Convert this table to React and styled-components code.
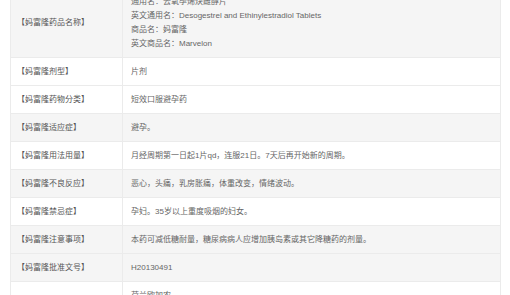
import React from 'react'
import styled, { createGlobalStyle } from 'styled-components'

const GlobalStyle = createGlobalStyle`
    body {
        margin: 0;
        background: #fff;
        font-family: "Liberation Sans", "Noto Sans CJK SC", sans-serif;
    }
`;

const rows = [
    {
        label: '【妈富隆药品名称】',
        lines: [
            '通用名：去氧孕烯炔雌醇片',
            '英文通用名：Desogestrel and Ethinylestradiol Tablets',
            '商品名：妈富隆',
            '英文商品名：Marvelon',
        ],
        shade: true,
    },
    { label: '【妈富隆剂型】', lines: ['片剂'] },
    { label: '【妈富隆药物分类】', lines: ['短效口服避孕药'] },
    { label: '【妈富隆适应症】', lines: ['避孕。'], shade: true },
    { label: '【妈富隆用法用量】', lines: ['月经周期第一日起1片qd，连服21日。7天后再开始新的周期。'] },
    { label: '【妈富隆不良反应】', lines: ['恶心，头痛，乳房胀痛，体重改变，情绪波动。'], shade: true },
    { label: '【妈富隆禁忌症】', lines: ['孕妇。35岁以上重度吸烟的妇女。'] },
    { label: '【妈富隆注意事项】', lines: ['本药可减低糖耐量，糖尿病病人应增加胰岛素或其它降糖药的剂量。'], shade: true },
    { label: '【妈富隆批准文号】', lines: ['H20130491'], shade: true },
    { label: '【妈富隆生产企业】', lines: ['荷兰欧加农', 'N.V. Organon', 'Oss, the Netherlands'] },
]

export default function App() {
    return (
        <>
            <GlobalStyle />
            <Page>
                <Table>
                    {rows.map((row) => (
                        <Row key={row.label} $shade={row.shade}>
                            <Label>{row.label}</Label>
                            <Value>
                                {row.lines.map((line) => (
                                    <Line key={line}>{line}</Line>
                                ))}
                            </Value>
                        </Row>
                    ))}
                </Table>
            </Page>
        </>
    )
}

const Page = styled.div`
    padding: 0 0 0 10px;
    overflow: hidden;
    height: 295px;
`;

const Table = styled.div`
    width: 491px;
    box-sizing: border-box;
    margin-top: -13px;
    border-left: 1px solid #ebebeb;
    border-right: 1px solid #ebebeb;
    border-top: 1px solid #ebebeb;
`;

const Row = styled.div`
    display: grid;
    grid-template-columns: 112px 1fr;
    border-bottom: 1px solid #ebebeb;
    background-color: ${(p) => (p.$shade ? '#f5f5f5' : '#fff')};
    font-size: 8px;
    line-height: 14px;
    color: #666;
`;

const Label = styled.div`
    display: flex;
    align-items: center;
    padding: 7px 6px 6px 6px;
    border-right: 1px solid #ebebeb;
    color: #555;
`;

const Value = styled.div`
    padding: 7px 8px 6px 8px;
`;

const Line = styled.div`
    white-space: nowrap;
`;
